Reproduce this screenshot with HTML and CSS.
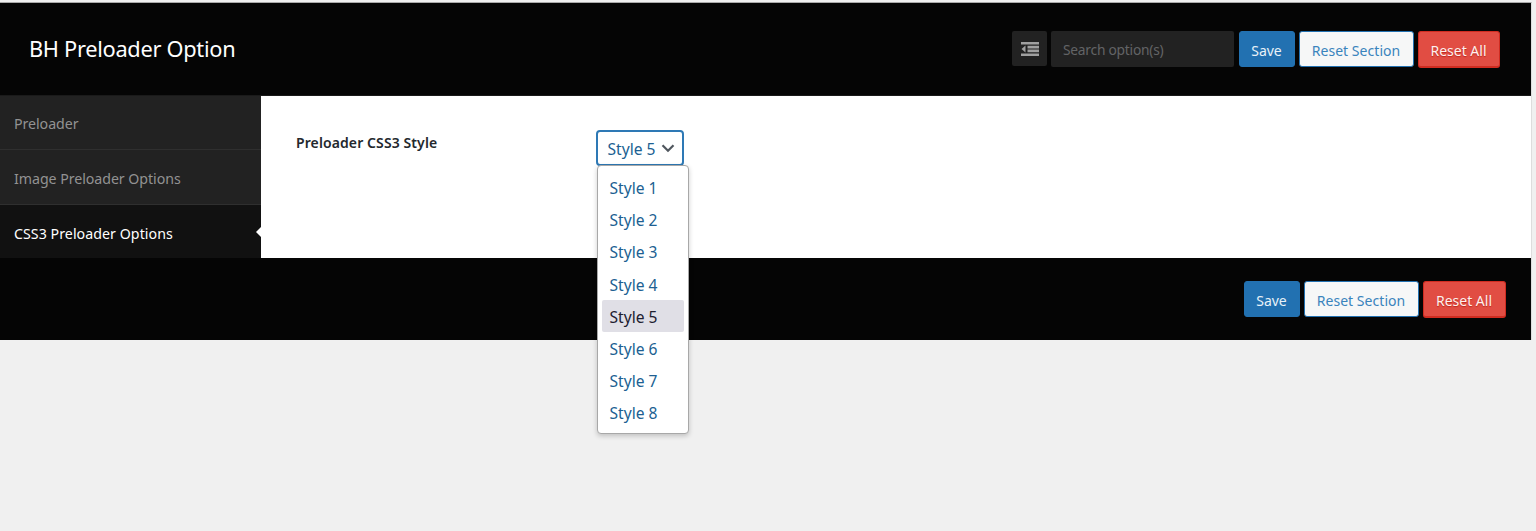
FILE: index.html
```html
<!DOCTYPE html>
<html lang="en">
<head>
<meta charset="utf-8">
<title>BH Preloader Option</title>
<link rel="stylesheet" href="styles.css">
</head>
<body>
<div class="panel">
  <header class="header">
    <h1 class="title">BH Preloader Option</h1>
    <div class="tools">
      <button class="expand" aria-label="Show all options">
        <svg width="18" height="14" viewBox="0 0 18 14" fill="#a0a0a0">
          <path d="M0 0h18v2.600H0zM6.500 3.800h11.500v2.600H6.500zM6.500 7.600h11.500v2.600H6.500zM0 11.400h18V14H0zM.5 7l4-3.600v7.200z"/>
        </svg>
      </button>
      <input class="search" type="text" placeholder="Search option(s)">
      <button class="btn save"><span>Save</span></button>
      <button class="btn section"><span>Reset Section</span></button>
      <button class="btn all"><span>Reset All</span></button>
    </div>
  </header>
  <div class="body">
    <nav class="nav">
      <a class="item first">Preloader</a>
      <a class="item second">Image Preloader Options</a>
      <a class="item active">CSS3 Preloader Options</a>
    </nav>
    <main class="content">
      <h4 class="label">Preloader CSS3 Style</h4>
      <div class="field">
        <div class="select">
          <span>Style 5</span>
          <svg width="14" height="9" viewBox="0 0 14 9" fill="none" stroke="#50575e" stroke-width="2.200"><path d="M1.500 1.300 7 6.800l5.500-5.500"/></svg>
        </div>
        <ul class="menu">
          <li>Style 1</li>
          <li>Style 2</li>
          <li>Style 3</li>
          <li>Style 4</li>
          <li class="chosen">Style 5</li>
          <li>Style 6</li>
          <li>Style 7</li>
          <li>Style 8</li>
        </ul>
      </div>
    </main>
  </div>
  <footer class="footer">
    <button class="btn save"><span>Save</span></button>
    <button class="btn section"><span>Reset Section</span></button>
    <button class="btn all"><span>Reset All</span></button>
  </footer>
</div>
</body>
</html>
```
FILE: styles.css
```css
* { box-sizing: border-box; }
html { background: #f0f0f0; }
body {
  margin: 0;
  padding-top: 2px;
  min-height: 531px;
  background: #f0f0f0;
  font-family: "Noto Sans", "Open Sans", sans-serif;
  font-size: 14.5px;
}
.panel {
  width: 1532px;
  height: 338px;
  border-top: 1px solid #aaa;
  border-right: 1px solid #ddd;
  background: #fff;
}
.header {
  height: 93px;
  padding: 0 31px 0 29px;
  display: flex;
  justify-content: space-between;
  background: #050505;
  border-bottom: 1px solid #1a1a1a;
}
.title {
  margin: 29px 0 0;
  color: #fff;
  font-size: 21.8px;
  letter-spacing: -0.3px;
  line-height: 34px;
  font-weight: 400;
  white-space: nowrap;
}
.tools { display: flex; align-items: flex-start; padding-top: 28px; }
.expand {
  width: 35px;
  height: 35px;
  margin-right: 4px;
  padding: 0;
  border: 0;
  border-radius: 2px;
  background: #222;
  display: flex;
  align-items: center;
  justify-content: center;
}
.search {
  width: 183px;
  height: 36px;
  margin-right: 5px;
  padding: 0 12px;
  border: 0;
  border-radius: 2px;
  background: #222;
  font: 13.8px "Noto Sans", sans-serif;
  letter-spacing: -0.25px;
}
.search::placeholder { color: #626466; opacity: 1; }
.btn {
  height: 36px;
  padding: 3px 1px 0 0;
  border: 1px solid;
  border-radius: 3px;
  font: 14px/32px "Noto Sans", sans-serif;
  white-space: nowrap;
  text-align: center;
}
.save { width: 56px; margin-right: 4px; background: #2271b1; border-color: #2271b1; color: #e8f1f8; }
.section { width: 115px; margin-right: 4px; background: #f6f7f7; border: 1px solid #2271b1; color: #3a84bd; letter-spacing: 0.05px; }
.all {
  width: 82px;
  height: 37px;
  background: #e14d43;
  border-color: #d02c21;
  border-bottom-width: 2px;
  color: #fff0ee;
  text-shadow: 0 1px 1px #ba281e;
}
.body { display: flex; height: 162px; }
.nav { width: 261px; background: #222; }
.item {
  display: block;
  height: 55px;
  padding-left: 14px;
  line-height: 55px;
  color: #929292;
  border-bottom: 1px solid #2f2f2f;
  font-size: 14.2px;
  letter-spacing: -0.05px;
}
.first { height: 54px; }
.second { line-height: 57px; }
.active {
  position: relative;
  height: 53px;
  background: #111;
  color: #fff;
  border: 0;
  line-height: 57px;
  letter-spacing: 0.05px;
}
.active::after {
  content: "";
  position: absolute;
  right: 0;
  top: 22px;
  border: 5px solid transparent;
  border-left: 0;
  border-right-color: #fff;
}
.content { flex: 1; display: flex; padding-left: 35px; }
.label {
  width: 300px;
  margin: 36px 0 0;
  font-size: 14px;
  letter-spacing: 0.1px;
  line-height: 22px;
  font-weight: 600;
  color: #23282d;
}
.field { position: relative; padding-top: 34px; }
.select {
  width: 88px;
  height: 36px;
  padding: 1px 7px 0 9.500px;
  border: 2px solid #2e79b5;
  border-radius: 4px;
  display: flex;
  align-items: center;
  justify-content: space-between;
  font-size: 15.6px;
  color: #205f92;
}
.menu {
  position: absolute;
  top: 69px;
  left: 1px;
  width: 92px;
  height: 269px;
  margin: 0;
  padding: 5px 4px;
  list-style: none;
  background: #fff;
  border: 1px solid #a8a8a8;
  border-radius: 4px;
  box-shadow: 0 2px 5px rgba(0, 0, 0, .2);
  font-size: 15.6px;
  color: #205f92;
}
.menu li { height: 32.200px; padding-left: 7.500px; line-height: 35px; white-space: nowrap; }
.menu .chosen { background: #e0dfe6; color: #202030; border-radius: 2px; }
.footer {
  height: 82px;
  padding: 23px 25px 0 0;
  display: flex;
  justify-content: flex-end;
  align-items: flex-start;
  background: #050505;
}
.footer .all { width: 83px; }
```
